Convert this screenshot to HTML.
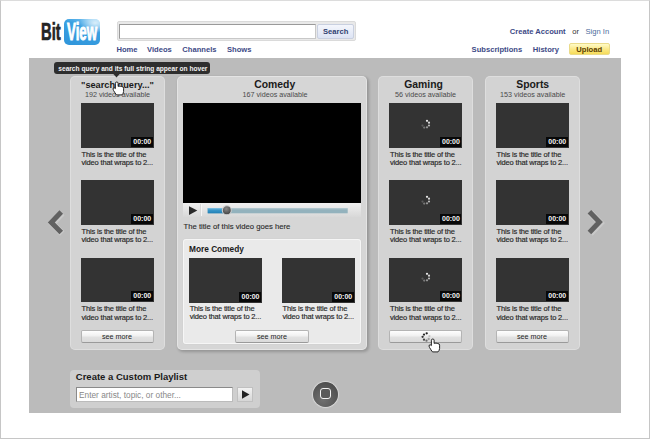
<!DOCTYPE html>
<html><head><meta charset="utf-8">
<style>
*{margin:0;padding:0;box-sizing:border-box}
html,body{width:650px;height:439px;overflow:hidden;background:#fff}
body{position:relative;font-family:"Liberation Sans",sans-serif;color:#333}
.a{position:absolute}
.t{position:absolute;white-space:nowrap;line-height:1}
.frame{left:0;top:0;width:650px;height:439px;border:1px solid #c6c6c6;border-top-color:#dcdcdc}
.nav{font-weight:bold;font-size:7.6px;color:#3d4a86}
.stage{left:29px;top:58px;width:592px;height:354px;background:#bbbbbb}
.panel{background:#d3d3d3;border-radius:5px;box-shadow:0 0 0 1px rgba(255,255,255,0.25) inset}
.ptitle{font-weight:bold;font-size:10.4px;color:#1a1a1a;text-align:center}
.pcount{font-size:7.2px;color:#4a4a4a;text-align:center}
.thumb{position:absolute;width:73px;height:44.5px;background:#333}
.badge{position:absolute;right:1px;bottom:1px;width:21.5px;height:9.6px;background:#080808;color:#f4f4f4;font-weight:bold;font-size:7px;line-height:9.6px;text-align:center;padding-left:1px}
.vt{position:absolute;margin:0.9px 0 0 0.7px;font-size:7.5px;letter-spacing:-0.17px;line-height:8.3px;color:#262626;white-space:nowrap;-webkit-text-stroke:0.15px #262626}
.btn{position:absolute;height:12.4px;border:1px solid #b4b4b4;border-bottom-color:#9a9a9a;border-radius:2px;background:linear-gradient(#fefefe,#f0f0f0 45%,#e2e2e2 55%,#dadada);font-size:7.2px;line-height:11.3px;text-align:center;color:#222}
</style></head><body>
<div class="a frame"></div>

<!-- logo -->
<div class="t" style="left:40.8px;top:20.8px;font-size:23.4px;font-weight:bold;color:#242424;-webkit-text-stroke:0.7px #242424;transform-origin:0 0;transform:scaleX(0.63)">Bit</div>
<div class="a" style="left:64px;top:19px;width:36px;height:25.5px;border-radius:5px;background:linear-gradient(200deg,#8fd0f5 0%,#3aa0e2 35%,#2f95da 100%)"></div>
<div class="a" style="left:64px;top:19px;width:36px;height:25.5px;border-radius:5px;background:radial-gradient(ellipse 16px 10px at 31px 4px,rgba(255,255,255,0.75),rgba(255,255,255,0) 100%)"></div>
<div class="t" style="left:66.6px;top:20.8px;font-size:23.4px;font-weight:bold;color:#fff;-webkit-text-stroke:0.9px #fff;transform-origin:0 0;transform:scaleX(0.57)">View</div>

<!-- search -->
<div class="a" style="left:116.5px;top:21px;width:239px;height:19.5px;background:#e9e9e9;border-radius:2px;border:1px solid #dadada"></div>
<div class="a" style="left:118.5px;top:24px;width:197px;height:14.6px;background:#fff;border:1px solid #9a9a9a;border-right-color:#c8c8c8;border-bottom-color:#c8c8c8"></div>
<div class="a" style="left:317px;top:24px;width:37px;height:15px;border:1px solid #c9d0e0;border-radius:2px;background:linear-gradient(#f4f6fc,#dde4f4)"></div>
<div class="t nav" style="left:323px;top:28px;color:#2f3f70">Search</div>

<div class="t nav" style="left:116.5px;top:45.5px">Home</div>
<div class="t nav" style="left:147px;top:45.5px">Videos</div>
<div class="t nav" style="left:182.3px;top:45.5px">Channels</div>
<div class="t nav" style="left:227px;top:45.5px">Shows</div>

<div class="t nav" style="left:509.8px;top:28px">Create Account</div>
<div class="t" style="left:572.3px;top:28px;font-size:7.6px;color:#333">or</div>
<div class="t" style="left:585.5px;top:28px;font-size:7.6px;color:#4d6c9c">Sign In</div>
<div class="t nav" style="left:471.6px;top:45.5px">Subscriptions</div>
<div class="t nav" style="left:532.8px;top:45.5px">History</div>
<div class="a" style="left:569px;top:43px;width:40.5px;height:12.3px;border:1px solid #eadb8a;border-radius:2px;background:linear-gradient(#fffbc8,#fbe98a 50%,#f6dc58)"></div>
<div class="t nav" style="left:576.3px;top:45.8px;color:#5a3e00">Upload</div>

<!-- stage -->
<div class="a stage" style="height:354.5px"></div>

<!-- arrows -->
<svg class="a" style="left:40px;top:200px" width="30" height="45" viewBox="0 0 30 45">
<polyline points="22.25,13.1 12.3,23.4 22.25,33.6" fill="none" stroke="#d2d2d2" stroke-opacity="0.6" stroke-width="6.5" stroke-linejoin="miter"/><polyline points="21.25,12.1 11.3,22.4 21.25,32.6" fill="none" stroke="#616161" stroke-width="5" stroke-linejoin="miter"/>
</svg>
<svg class="a" style="left:580px;top:200px" width="30" height="45" viewBox="0 0 30 45">
<polyline points="10.4,12.8 20.4,23.1 10.4,33.5" fill="none" stroke="#d2d2d2" stroke-opacity="0.6" stroke-width="6.5" stroke-linejoin="miter"/><polyline points="9.4,11.8 19.4,22.1 9.4,32.5" fill="none" stroke="#616161" stroke-width="5" stroke-linejoin="miter"/>
</svg>

<!-- panel 1 -->
<div class="a panel" style="left:70px;top:76.4px;width:95px;height:273.6px"></div>
<div class="t ptitle" style="left:70px;width:95px;top:80.5px;font-size:9.2px">"search query..."</div>
<div class="t pcount" style="left:70px;width:95px;top:90.8px">192 videos available</div>

<div class="thumb" style="left:80.5px;top:103px"><div class="badge">00:00</div></div>
<div class="vt" style="left:80.8px;top:150px">This is the title of the<br>video that wraps to 2...</div>
<div class="thumb" style="left:80.5px;top:180.3px"><div class="badge">00:00</div></div>
<div class="vt" style="left:80.8px;top:227.3px">This is the title of the<br>video that wraps to 2...</div>
<div class="thumb" style="left:80.5px;top:257.5px"><div class="badge">00:00</div></div>
<div class="vt" style="left:80.8px;top:304.5px">This is the title of the<br>video that wraps to 2...</div>
<div class="btn" style="left:80.5px;top:330.2px;width:73px">see more</div>

<!-- middle panel -->
<div class="a panel" style="left:177.3px;top:76.4px;width:189.5px;height:273.2px;background:#d6d6d6;box-shadow:1.5px 1.5px 3px rgba(0,0,0,0.2),inset 0 0 0 1px rgba(255,255,255,0.35)"></div>
<div class="t ptitle" style="left:180px;width:189.5px;top:79.5px">Comedy</div>
<div class="t pcount" style="left:180.3px;width:189.5px;top:90.8px">167 videos available</div>
<div class="a" style="left:183px;top:103.2px;width:178.3px;height:100px;background:#000"></div>
<div class="a" style="left:183px;top:203px;width:178.3px;height:13.5px;background:linear-gradient(#f0f0f0,#d8d8d8)"></div>
<svg class="a" style="left:183px;top:203px" width="179" height="14" viewBox="0 0 179 14">
<polygon points="6,3.2 6,12 14.3,7.6" fill="#2a2a2a"/>
<line x1="17.5" y1="1" x2="17.5" y2="13" stroke="#d9d9d9" stroke-width="1"/><line x1="18.5" y1="1" x2="18.5" y2="13" stroke="#f6f6f6" stroke-width="1"/>
<rect x="24.7" y="5" width="140" height="5.3" fill="#93b2bd"/>
<defs><linearGradient id="bl" x1="0" y1="0" x2="0" y2="1"><stop offset="0" stop-color="#4aa6d6"/><stop offset="1" stop-color="#2180b6"/></linearGradient></defs><rect x="24.7" y="5" width="19" height="5.3" fill="url(#bl)"/><rect x="24.7" y="5" width="140" height="1.3" fill="#fff" fill-opacity="0.25"/>
<defs><radialGradient id="kg" cx="0.45" cy="0.35" r="0.7"><stop offset="0" stop-color="#8a8a8a"/><stop offset="1" stop-color="#3a3a3a"/></radialGradient></defs><circle cx="43.8" cy="7.2" r="4.5" fill="url(#kg)" stroke="#cfcfcf" stroke-width="1.1"/>
</svg>
<div class="t" style="left:183.5px;top:222.9px;font-size:7.7px;color:#2a2a2a;-webkit-text-stroke:0.12px #2a2a2a">The title of this video goes here</div>

<div class="a" style="left:182.6px;top:238.6px;width:178.8px;height:105.4px;background:#eaeaea;border-radius:3px;box-shadow:0 0 0 0.8px #d2d2d2,inset 0 0 0 1px rgba(255,255,255,0.55)"></div>
<div class="t" style="left:189px;top:244.6px;font-size:8.3px;font-weight:bold;color:#1a1a1a">More Comedy</div>
<div class="thumb" style="left:188.8px;top:258px"><div class="badge">00:00</div></div>
<div class="vt" style="left:189px;top:304px">This is the title of the<br>video that wraps to 2...</div>
<div class="thumb" style="left:281.5px;top:258px"><div class="badge">00:00</div></div>
<div class="vt" style="left:281.8px;top:304px">This is the title of the<br>video that wraps to 2...</div>
<div class="btn" style="left:235.2px;top:330.2px;width:73.5px;line-height:11.5px;height:12.8px">see more</div>

<!-- gaming -->
<div class="a panel" style="left:377.7px;top:76.4px;width:95.7px;height:273.6px"></div>
<div class="t ptitle" style="left:375.7px;width:95.7px;top:79.5px">Gaming</div>
<div class="t pcount" style="left:377.7px;width:95.7px;top:90.8px">56 videos available</div>
<div class="thumb" style="left:389.2px;top:103px"><div class="badge">00:00</div></div>
<div class="vt" style="left:389.3px;top:150px">This is the title of the<br>video that wraps to 2...</div>
<div class="thumb" style="left:389.2px;top:180.3px"><div class="badge">00:00</div></div>
<div class="vt" style="left:389.3px;top:227.3px">This is the title of the<br>video that wraps to 2...</div>
<div class="thumb" style="left:389.2px;top:257.5px"><div class="badge">00:00</div></div>
<div class="vt" style="left:389.3px;top:304.5px">This is the title of the<br>video that wraps to 2...</div>
<div class="btn" style="left:389px;top:330.2px;width:73px"></div>

<!-- sports -->
<div class="a panel" style="left:485.4px;top:76.4px;width:94.6px;height:273.6px"></div>
<div class="t ptitle" style="left:485.4px;width:94.6px;top:79.5px">Sports</div>
<div class="t pcount" style="left:485.4px;width:94.6px;top:90.8px">153 videos available</div>
<div class="thumb" style="left:495.5px;top:103px"><div class="badge">00:00</div></div>
<div class="vt" style="left:495.8px;top:150px">This is the title of the<br>video that wraps to 2...</div>
<div class="thumb" style="left:495.5px;top:180.3px"><div class="badge">00:00</div></div>
<div class="vt" style="left:495.8px;top:227.3px">This is the title of the<br>video that wraps to 2...</div>
<div class="thumb" style="left:495.5px;top:257.5px"><div class="badge">00:00</div></div>
<div class="vt" style="left:495.8px;top:304.5px">This is the title of the<br>video that wraps to 2...</div>
<div class="btn" style="left:495.5px;top:330.2px;width:73px">see more</div>

<!-- playlist -->
<div class="a" style="left:70px;top:369.5px;width:190.3px;height:38.2px;background:#cfcfcf;border-radius:4px"></div>
<div class="t" style="left:75.8px;top:372px;font-size:9.5px;font-weight:bold;color:#1a1a1a">Create a Custom Playlist</div>
<div class="a" style="left:76.2px;top:387.3px;width:157px;height:14.5px;background:#fff;border:1px solid #8a8a8a;border-right-color:#bbb;border-bottom-color:#bbb"></div>
<div class="t" style="left:79px;top:391.4px;font-size:8.3px;color:#888">Enter artist, topic, or other...</div>
<div class="a" style="left:236.8px;top:387.2px;width:16.6px;height:14.8px;background:linear-gradient(#f2f2f2,#d6d6d6);border:1px solid #c0c0c0"></div>
<svg class="a" style="left:236.8px;top:387.2px" width="17" height="15" viewBox="0 0 17 15"><polygon points="5,3.2 5,11.8 12.5,7.5" fill="#222"/></svg>

<!-- round button -->
<div class="a" style="left:313.2px;top:381.6px;width:25.2px;height:25.2px;border-radius:50%;background:radial-gradient(circle at 40% 70%,#717171,#4c4c4c 80%);box-shadow:0 0 1.2px 0.7px rgba(232,232,232,0.9)"></div>
<div class="a" style="left:319.8px;top:388.4px;width:10.8px;height:10.4px;border:1.7px solid #f2f2f2;border-radius:3px;background:#5a5a5a"></div>


<!-- spinners -->
<svg class="a" style="left:418px;top:116px" width="16" height="16" viewBox="-8 -8 16 16">
<g fill="#fff"><circle cx="1" cy="-3.2" r="1.1" opacity="0.9"/><circle cx="3" cy="-1.3" r="1.1" opacity="0.8"/><circle cx="3" cy="1.5" r="1.1" opacity="0.65"/><circle cx="1" cy="3.3" r="1.1" opacity="0.5"/><circle cx="-1.8" cy="3.6" r="1.1" opacity="0.35"/><circle cx="-3.5" cy="1.6" r="1.1" opacity="0.2"/></g>
</svg>
<svg class="a" style="left:418px;top:192px" width="16" height="16" viewBox="-8 -8 16 16">
<g fill="#fff"><circle cx="1" cy="-3.2" r="1.1" opacity="0.9"/><circle cx="3" cy="-1.3" r="1.1" opacity="0.8"/><circle cx="3" cy="1.5" r="1.1" opacity="0.65"/><circle cx="1" cy="3.3" r="1.1" opacity="0.5"/><circle cx="-1.8" cy="3.6" r="1.1" opacity="0.35"/><circle cx="-3.5" cy="1.6" r="1.1" opacity="0.2"/></g>
</svg>
<svg class="a" style="left:418px;top:269px" width="16" height="16" viewBox="-8 -8 16 16">
<g fill="#fff"><circle cx="1" cy="-3.2" r="1.1" opacity="0.9"/><circle cx="3" cy="-1.3" r="1.1" opacity="0.8"/><circle cx="3" cy="1.5" r="1.1" opacity="0.65"/><circle cx="1" cy="3.3" r="1.1" opacity="0.5"/><circle cx="-1.8" cy="3.6" r="1.1" opacity="0.35"/><circle cx="-3.5" cy="1.6" r="1.1" opacity="0.2"/></g>
</svg>
<svg class="a" style="left:418px;top:328.6px" width="16" height="16" viewBox="-8 -8 16 16">
<g fill="#111"><circle cx="0.7" cy="-3.7" r="1.15" opacity="0.95"/><circle cx="-2" cy="-2.4" r="1.15" opacity="0.9"/><circle cx="-3.4" cy="-0.2" r="1.15" opacity="0.85"/><circle cx="-2" cy="2.7" r="1.15" opacity="0.75"/><circle cx="0.5" cy="3.7" r="1.15" opacity="0.55"/><circle cx="2.7" cy="2" r="1.15" opacity="0.3"/><circle cx="3.4" cy="-0.9" r="1.15" opacity="0.18"/></g>
</svg>
<!-- cursors -->
<svg class="a" style="left:425px;top:335.1px" width="20" height="20" viewBox="0 0 20 20"><path d="M6.4,5.2 Q6.4,4 7.75,4 Q9.1,4 9.1,5.2 L9.1,8.4 Q10,7.8 11,8.3 Q12,7.9 12.8,8.6 Q14.6,8.4 14.6,10.2 L14.6,13.5 Q14.4,15.5 13,16.9 L7.5,16.9 Q6,15 4.6,12.6 Q3.7,11 4.3,10 Q5.2,9.3 6.4,10.6 Z" fill="#fff" stroke="#1a1a1a" stroke-width="0.95" stroke-linejoin="round"/></svg>
<svg class="a" style="left:108.5px;top:78.3px" width="20" height="20" viewBox="0 0 20 20"><path d="M6.4,5.2 Q6.4,4 7.75,4 Q9.1,4 9.1,5.2 L9.1,8.4 Q10,7.8 11,8.3 Q12,7.9 12.8,8.6 Q14.6,8.4 14.6,10.2 L14.6,13.5 Q14.4,15.5 13,16.9 L7.5,16.9 Q6,15 4.6,12.6 Q3.7,11 4.3,10 Q5.2,9.3 6.4,10.6 Z" fill="#fff" stroke="#1a1a1a" stroke-width="0.95" stroke-linejoin="round"/></svg>
<!-- tooltip -->
<div class="a" style="left:53.7px;top:62px;width:156.8px;height:11.8px;background:#2e2e2e;border-radius:3px"></div>
<svg class="a" style="left:110px;top:73px" width="13" height="6" viewBox="0 0 13 6"><polygon points="2.5,0 10.5,0 6.5,4.5" fill="#2e2e2e"/></svg>
<div class="t" style="left:58.3px;top:66px;font-size:6.6px;font-weight:bold;color:#f2f2f2">search query and its full string appear on hover</div>

</body></html>
